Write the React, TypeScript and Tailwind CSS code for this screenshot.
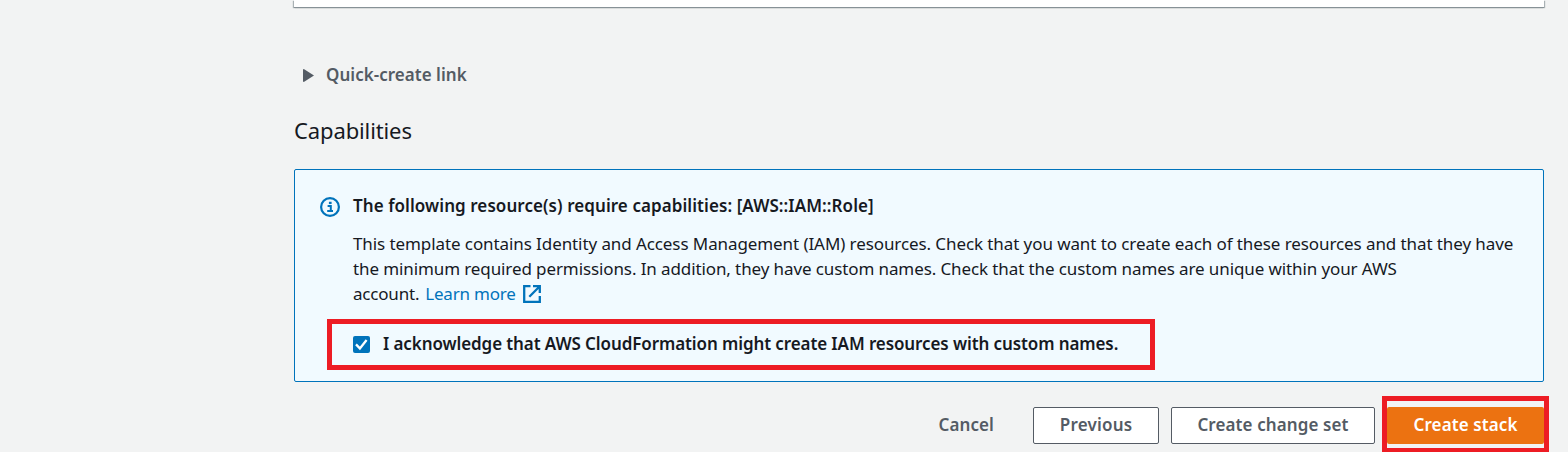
import React from "react";

function InfoIcon() {
  return (
    <svg viewBox="0 0 20 20" className="h-5 w-5 shrink-0" fill="none" stroke="#0073bb">
      <circle cx="10" cy="10" r="8.9" strokeWidth="2.2" />
      <path d="M7.6 9h3.2v5M7.2 14h5.8" strokeWidth="2" />
      <path d="M8.9 5.9h2.7" strokeWidth="2.3" />
    </svg>
  );
}

function ExternalIcon() {
  return (
    <svg viewBox="0 0 18 18" className="h-[18px] w-[18px] shrink-0" fill="none" stroke="#0073bb" strokeWidth="2.3">
      <path d="M7.5 1.2H1.2v15.6h15.6V11" />
      <path d="M10 1.2h6.8V8M16.5 1.5L6.3 11.7" />
    </svg>
  );
}

function Checkbox() {
  return (
    <span role="checkbox" aria-checked="true" className="mt-0.5 flex h-[17px] w-[17px] shrink-0 items-center justify-center rounded-[2px] bg-[#0073bb]">
      <svg viewBox="0 0 17 17" className="h-[17px] w-[17px]" fill="none" stroke="#fff" strokeWidth="2.3">
        <path d="M3 8.4l3.9 4L13.6 4" />
      </svg>
    </span>
  );
}

const outlined =
  "flex h-[37px] items-center justify-center whitespace-nowrap rounded-[2px] border border-[#545b64] bg-white pb-0.5 text-[#545b64]";

export default function App() {
  return (
    <div className="h-[452px] w-[1568px] overflow-hidden bg-[#f2f3f3] pl-[294px] font-['Noto_Sans',sans-serif] text-[17px] text-[#16191f]">
      <main className="flex w-[1250px] flex-col">
        <div className="h-[7px] bg-white shadow-[0_1px_0_0_#879196,1px_1px_1px_0_rgba(0,28,36,0.3),-1px_1px_1px_0_rgba(0,28,36,0.3)]" />

        <div className="mt-[55px] flex h-[25px] items-center pl-[9px] font-semibold text-[#545b64]">
          <svg viewBox="0 0 11 13" className="mt-px h-[13px] w-[11px] shrink-0" fill="#545b64">
            <path d="M.8 0L11 6.5.8 13Q0 13 0 12V1Q0 0 .8 0Z" />
          </svg>
          <span className="ml-3 whitespace-nowrap tracking-[0.03px]">Quick-create link</span>
        </div>

        <h2 className="mt-[28px] h-[30px] whitespace-nowrap text-[22px] leading-[30px] tracking-[-0.12px]">Capabilities</h2>

        <section className="mt-[24px] flex h-[213px] rounded-[2px] border border-[#0073bb] bg-[#f1faff] pl-[25px] pt-[27px]">
          <InfoIcon />
          <div className="ml-[13px] -mt-1 flex flex-col items-start">
            <h3 className="h-[25px] whitespace-nowrap font-semibold leading-[25px] tracking-[0.07px]">
              The following resource(s) require capabilities: [AWS::IAM::Role]
            </h3>
            <p className="mt-[13px] whitespace-nowrap leading-[25px]">
              <span className="block tracking-[-0.088px]">This template contains Identity and Access Management (IAM) resources. Check that you want to create each of these resources and that they have</span>
              <span className="block tracking-[-0.105px]">the minimum required permissions. In addition, they have custom names. Check that the custom names are unique within your AWS</span>
              <span className="flex items-center">
                <span className="tracking-[-0.2px]">account.</span>
                <a className="ml-1.5 flex items-center gap-[7px] text-[#0073bb]">
                  <span className="tracking-[-0.2px]">Learn more</span>
                  <ExternalIcon />
                </a>
              </span>
            </p>
            <label className="relative mt-[25px] flex h-[25px] items-center font-semibold">
              <Checkbox />
              <span className="ml-[13px] whitespace-nowrap tracking-[-0.1px]">
                I acknowledge that AWS CloudFormation might create IAM resources with custom names.
              </span>
              <span className="absolute -left-[26px] -top-[12px] h-[51px] w-[828px] border-[5px] border-[#ed1c24]" />
            </label>
          </div>
        </section>

        <footer className="mt-[25px] flex h-[37px] items-center justify-end font-semibold">
          <button className="mr-[39px] whitespace-nowrap pb-0.5 text-[#545b64]"><span className="tracking-[0.1px]">Cancel</span></button>
          <button className={outlined + " mr-3 w-[126px]"}><span className="tracking-[0.2px]">Previous</span></button>
          <button className={outlined + " mr-3 w-[204px]"}><span className="tracking-[0.1px]">Create change set</span></button>
          <button className="relative flex h-[37px] w-[157px] items-center justify-center whitespace-nowrap rounded-[2px] bg-[#ec7211] pb-0.5 text-white">
            <span className="tracking-[0.1px]">Create stack</span>
            <span className="absolute -left-[5px] -top-[11px] h-[56px] w-[167px] border-[5px] border-b-4 border-[#ed1c24]" />
          </button>
        </footer>
      </main>
    </div>
  );
}
